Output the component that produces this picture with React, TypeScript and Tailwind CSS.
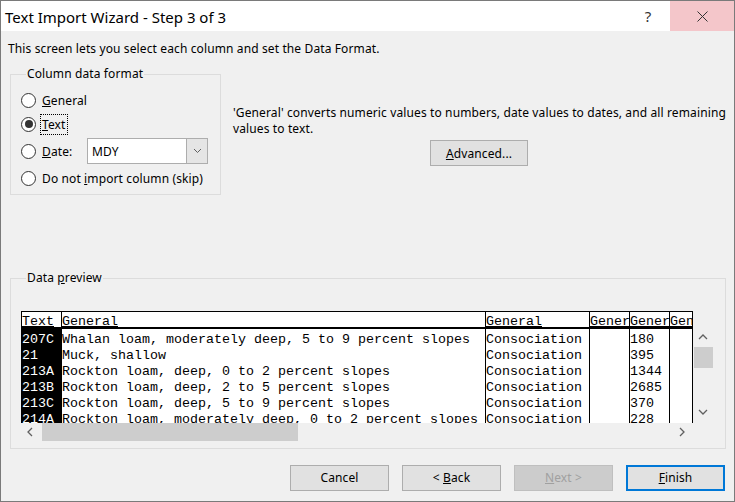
import React from "react";

const ui = { fontFamily: '"Noto Sans", "Open Sans", sans-serif' };
const mono = { fontFamily: '"Liberation Mono", "Courier New", monospace' };

const rows: string[][] = [
  ["207C", "Whalan loam, moderately deep, 5 to 9 percent slopes", "Consociation", "", "180", ""],
  ["21", "Muck, shallow", "Consociation", "", "395", ""],
  ["213A", "Rockton loam, deep, 0 to 2 percent slopes", "Consociation", "", "1344", ""],
  ["213B", "Rockton loam, deep, 2 to 5 percent slopes", "Consociation", "", "2685", ""],
  ["213C", "Rockton loam, deep, 5 to 9 percent slopes", "Consociation", "", "370", ""],
  ["214A", "Rockton loam, moderately deep, 0 to 2 percent slopes", "Consociation", "", "228", ""],
];
const headers = ["Text", "General", "General", "Gener", "Gener", "Gen"];
const widths = ["w-[40px]", "w-[424px]", "w-[104px]", "w-[40px]", "w-[40px]", "w-[23px]"];

function Radio({ checked }: { checked?: boolean }) {
  return (
    <span className="w-[15px] h-[15px] rounded-full border border-[#333333] bg-white flex items-center justify-center shrink-0">
      {checked && <span className="w-[8px] h-[8px] rounded-full bg-[#333333]" />}
    </span>
  );
}

function Chevron({ dir }: { dir: "up" | "down" | "left" | "right" }) {
  const d =
    dir === "up"
      ? "M1 6 L5 2 L9 6"
      : dir === "down"
      ? "M1 2 L5 6 L9 2"
      : dir === "left"
      ? "M6 1 L2 5 L6 9"
      : "M2 1 L6 5 L2 9";
  const w = dir === "up" || dir === "down" ? 10 : 8;
  const h = dir === "up" || dir === "down" ? 8 : 10;
  return (
    <svg width={w} height={h} viewBox={`0 0 ${w} ${h}`}>
      <path d={d} fill="none" stroke="#606060" strokeWidth="1.3" />
    </svg>
  );
}

function Btn({ children, variant }: { children: React.ReactNode; variant?: "default" | "disabled" }) {
  const cls =
    variant === "default"
      ? "border-2 border-[#0078d7] bg-[#e1e1e1] text-black"
      : variant === "disabled"
      ? "border border-[#bfbfbf] bg-[#cccccc] text-[#a0a0a0]"
      : "border border-[#adadad] bg-[#e1e1e1] text-black";
  return (
    <div className={`w-[99px] h-[26px] flex items-center justify-center text-[12px] ${cls}`}>
      <span className="whitespace-pre">{children}</span>
    </div>
  );
}

function Row({ cells, h }: { cells: string[]; h: string }) {
  return (
    <div className={`flex ${h}`}>
      {cells.map((c, ci) => (
        <div
          key={ci}
          className={`${widths[ci]} shrink-0 ${h} leading-[16px] whitespace-pre overflow-hidden ${
            ci === 0 ? "bg-black text-white" : "border-l border-black"
          }`}
        >
          {ci === 0 ? <span className="pl-[1px]">{c}</span> : c}
        </div>
      ))}
    </div>
  );
}

export default function App() {
  return (
    <div
      className="w-[735px] h-[502px] bg-[#f0f0f0] border border-[#7a7a7a] flex flex-col text-black overflow-hidden"
      style={ui}
    >
      {/* Title bar */}
      <div className="h-[30px] bg-white flex items-center shrink-0">
        <div className="pl-[4px] text-[15px] leading-[20px] flex-1 pt-[1px]">Text Import Wizard - Step 3 of 3</div>
        <div className="w-[44px] h-full flex items-center justify-center text-[15px] text-[#333]">?</div>
        <div className="w-[64px] h-full flex items-center justify-center bg-[#f4c6ca]">
          <svg width="11" height="11" viewBox="0 0 11 11">
            <path d="M0.5 0.5 L10.5 10.5 M10.5 0.5 L0.5 10.5" stroke="#333" strokeWidth="1" />
          </svg>
        </div>
      </div>

      {/* Body */}
      <div className="flex flex-col pl-[9px] text-[12px] tracking-[0.12px]">
        <div className="leading-[16px] mt-[10px] -ml-[2px]">This screen lets you select each column and set the Data Format.</div>

        <div className="flex mt-[9px]">
          <fieldset className="w-[211px] h-[129px] border border-[#dcdcdc] pl-[10px] pb-[8px]">
            <legend className="ml-[5px] px-[1px] leading-[16px]">Column data format</legend>
            <div className="flex items-center h-[16px] mt-[10px]">
              <Radio />
              <span className="ml-[6px] leading-[16px] pt-[1px]">
                <u>G</u>eneral
              </span>
            </div>
            <div className="flex items-center h-[20px] mt-[6px]">
              <Radio checked />
              <span className="ml-[4px] px-[1px] border border-dotted border-black leading-[18px] pt-[1px]">
                <u>T</u>ext
              </span>
            </div>
            <div className="flex items-center h-[26px] mt-[4px]">
              <Radio />
              <span className="ml-[6px] w-[45px] leading-[16px] pt-[1px]">
                <u>D</u>ate:
              </span>
              <div className="w-[121px] h-[26px] border border-[#adadad] bg-white flex">
                <div className="flex-1 pl-[4px] flex items-center pt-[1px]">MDY</div>
                <div className="w-[21px] bg-[#e5e5e5] border-l border-[#adadad] flex items-center justify-center">
                  <svg width="9" height="6" viewBox="0 0 9 6">
                    <path d="M1 1 L4.5 4.5 L8 1" fill="none" stroke="#606060" strokeWidth="1" />
                  </svg>
                </div>
              </div>
            </div>
            <div className="flex items-center h-[16px] mt-[6px]">
              <Radio />
              <span className="ml-[6px] leading-[16px] pt-[1px]">
                Do not <u>i</u>mport column (skip)
              </span>
            </div>
          </fieldset>

          <div className="ml-[12px] w-[492px] flex flex-col">
            <div className="mt-[39px] leading-[16px] whitespace-nowrap">
              'General' converts numeric values to numbers, date values to dates, and all remaining
              <br />
              values to text.
            </div>
            <div className="mt-[3px] mx-auto w-[98px] h-[26px] border border-[#adadad] bg-[#e1e1e1] flex items-center justify-center">
              <span className="pt-[1px]">
                <u>A</u>dvanced...
              </span>
            </div>
          </div>
        </div>

        {/* Data preview */}
        <fieldset className="mt-[75px] w-[716px] h-[179px] border border-[#dcdcdc] pl-[10px] tracking-normal">
          <legend className="ml-[5px] px-[1px] leading-[16px] tracking-[0.12px]">
            Data <u>p</u>review
          </legend>
          <div className="mt-[25px] flex">
            <div className="flex flex-col">
              <div className="w-[672px] h-[112px] bg-white border-r border-black overflow-hidden text-[13.33px]" style={mono}>
                <div className="flex border-t border-b-2 border-black h-[18px]">
                  {headers.map((h, i) => (
                    <div
                      key={i}
                      className={`${widths[i]} shrink-0 border-l border-black h-[15px] pt-[2px] leading-[16px] whitespace-pre overflow-x-clip`}
                    >
                      <u>{h}</u>
                    </div>
                  ))}
                </div>
                <Row cells={["", "", "", "", "", ""]} h="h-[3px]" />
                {rows.map((r, ri) => (
                  <Row key={ri} cells={r} h="h-[16px]" />
                ))}
              </div>
              {/* horizontal scrollbar */}
              <div className="w-[672px] h-[18px] flex items-center">
                <div className="w-[18px] flex items-center justify-center">
                  <Chevron dir="left" />
                </div>
                <div className="ml-[3px] w-[256px] h-[18px] bg-[#cdcdcd]" />
                <div className="flex-1" />
                <div className="w-[18px] mr-[2px] flex items-center justify-center">
                  <Chevron dir="right" />
                </div>
              </div>
            </div>
            {/* vertical scrollbar */}
            <div className="w-[20px] flex flex-col items-center">
              <div className="h-[16px]" />
              <div className="h-[20px] w-full flex items-center justify-center">
                <Chevron dir="up" />
              </div>
              <div className="h-[21px] w-[19px] bg-[#cdcdcd]" />
              <div className="h-[34px]" />
              <div className="h-[20px] w-full flex items-center justify-center">
                <Chevron dir="down" />
              </div>
            </div>
          </div>
        </fieldset>
      </div>

      {/* Buttons */}
      <div className="mt-[16px] flex justify-end gap-[13px] pr-[9px] text-[12px] tracking-[0.12px]">
        <Btn>Cancel</Btn>
        <Btn>
          &lt; <u>B</u>ack
        </Btn>
        <Btn variant="disabled">
          <u>N</u>ext &gt;
        </Btn>
        <Btn variant="default">
          <u>F</u>inish
        </Btn>
      </div>
    </div>
  );
}
